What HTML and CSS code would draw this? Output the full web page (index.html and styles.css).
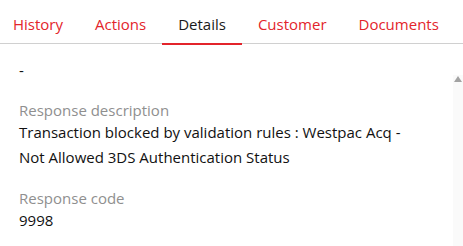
FILE: index.html
```html
<!DOCTYPE html>
<html>
<head>
<meta charset="utf-8">
<link rel="stylesheet" href="styles.css">
</head>
<body>
<div class="page">
  <nav class="tabs">
    <div class="tab">History</div>
    <div class="tab">Actions</div>
    <div class="tab active">Details</div>
    <div class="tab">Customer</div>
    <div class="tab">Documents</div>
  </nav>
  <div class="panel">
    <div class="content">
      <div class="value">-</div>
      <div class="field">
        <div class="label">Response description</div>
        <div class="value">Transaction blocked by validation rules : Westpac Acq -<br>Not Allowed 3DS Authentication Status</div>
      </div>
      <div class="field">
        <div class="label">Response code</div>
        <div class="value">9998</div>
      </div>
    </div>
    <div class="scrollbar">
      <svg class="arrow" width="8" height="6" viewBox="0 0 8 6"><polygon points="4,0 8,6 0,6" fill="#a3a3a3"/></svg>
    </div>
  </div>
</div>
</body>
</html>
```
FILE: styles.css
```css
html, body {
  margin: 0;
  padding: 0;
  background: #fff;
}
body {
  font-family: "Open Sans", "Noto Sans", sans-serif;
  width: 463px;
  height: 246px;
  overflow: hidden;
}
.tabs {
  display: flex;
  height: 43px;
  border-bottom: 1px solid #d0d0d0;
  margin-left: -3px;
}
.tab {
  padding: 5px 16px 0;
  font-size: 15px;
  line-height: 38px;
  color: #e3242b;
  box-sizing: border-box;
  height: 45px;
  flex: none;
}
.tab.active {
  color: #1a1a1a;
  border-bottom: 2px solid #e3242b;
}
.panel {
  display: flex;
  height: 202px;
  overflow: hidden;
}
.content {
  flex: 1;
  padding: 14px 0 0 19px;
}
.value {
  font-size: 15px;
  line-height: 25px;
  color: #111;
}
.field {
  margin-top: 17px;
}
.field + .field {
  margin-top: 18px;
}
.label {
  font-size: 15px;
  line-height: 20px;
  color: #8f8f8f;
}
.scrollbar {
  width: 10px;
  margin-top: 31px;
  background: #fafafa;
  display: flex;
  justify-content: center;
  padding-top: 1px;
  box-sizing: border-box;
}
.arrow {
  display: block;
}
```
